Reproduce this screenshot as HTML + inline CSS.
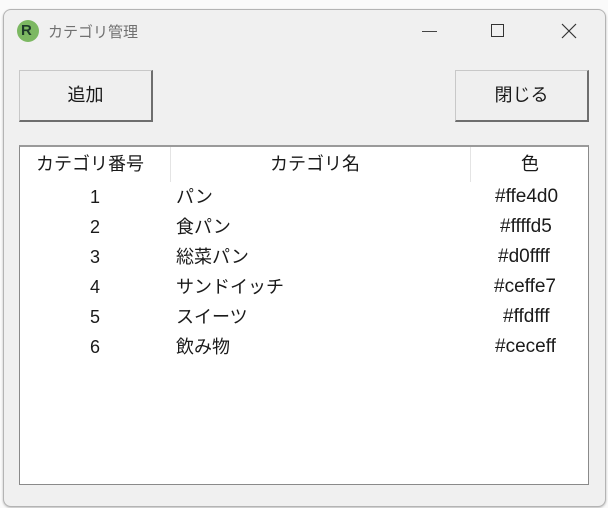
<!DOCTYPE html>
<html><head><meta charset="utf-8"><style>
body{margin:0;width:608px;height:508px;background:#fafafa;position:relative;overflow:hidden;font-family:"Liberation Sans","Noto Sans CJK JP",sans-serif;color:#1a1a1a}
.win{position:absolute;left:3px;top:9px;width:601px;height:496px;background:#f0f0f0;border:1px solid #b4b4b4;border-radius:8px;box-shadow:0 1px 2px rgba(0,0,0,.25)}
.t{position:absolute;left:48px;top:21px;font-size:15px;color:#707070}
.ic{position:absolute;left:17px;top:20px;width:22px;height:22px;border-radius:50%;background:#7cb862}
.ic span{position:absolute;left:4px;top:2px;font-size:15px;font-weight:bold;color:#1e3a2a}
.btn{position:absolute;top:70px;height:52px;width:134px;background:#efefef;border:1px solid #c8c8c8;border-right:2px solid #6e6e6e;border-bottom:2px solid #6e6e6e;box-sizing:border-box;font-size:18px;text-align:center;line-height:49px}
.tbl{position:absolute;left:19px;top:145px;width:570px;height:340px;background:#fff;border:1px solid #8a8a8a;border-top:2px solid #9a9a9a;box-sizing:border-box}
.c{position:absolute;font-size:18px;white-space:nowrap;line-height:20px}
.h{font-size:19px}
.sep{position:absolute;top:147px;width:1px;height:35px;background:#e4e4e4}
</style></head><body>
<div class="win"></div>
<div class="ic"><span>R</span></div>
<div class="t">カテゴリ管理</div>
<div style="position:absolute;left:422px;top:31px;width:15px;height:1px;background:#444"></div>
<div style="position:absolute;left:491px;top:24px;width:13px;height:13px;border:1px solid #333;box-sizing:border-box"></div>
<svg style="position:absolute;left:561px;top:23px" width="16" height="16"><path d="M1 1L15 15M15 1L1 15" stroke="#333" stroke-width="1.2"/></svg>
<div class="btn" style="left:19px">追加</div>
<div class="btn" style="left:455px">閉じる</div>
<div class="tbl"></div>
<div class="sep" style="left:170px"></div>
<div class="sep" style="left:470px"></div>
<div class="c" style="left:36px;top:154px">カテゴリ番号</div>
<div class="c" style="left:270px;top:154px">カテゴリ名</div>
<div class="c" style="left:521px;top:154px">色</div>
<div style="position:absolute;left:20px;top:187px;width:568px">
<div class="c" style="left:70px;top:0">1</div><div class="c" style="left:156px;top:0">パン</div><div class="c h" style="left:475px;top:0">#ffe4d0</div>
<div class="c" style="left:70px;top:30px">2</div><div class="c" style="left:156px;top:30px">食パン</div><div class="c h" style="left:480px;top:30px">#ffffd5</div>
<div class="c" style="left:70px;top:60px">3</div><div class="c" style="left:156px;top:60px">総菜パン</div><div class="c h" style="left:478px;top:60px">#d0ffff</div>
<div class="c" style="left:70px;top:90px">4</div><div class="c" style="left:156px;top:90px">サンドイッチ</div><div class="c h" style="left:474px;top:90px">#ceffe7</div>
<div class="c" style="left:70px;top:120px">5</div><div class="c" style="left:156px;top:120px">スイーツ</div><div class="c h" style="left:483px;top:120px">#ffdfff</div>
<div class="c" style="left:70px;top:150px">6</div><div class="c" style="left:156px;top:150px">飲み物</div><div class="c h" style="left:475px;top:150px">#ceceff</div>
</div>
</body></html>
